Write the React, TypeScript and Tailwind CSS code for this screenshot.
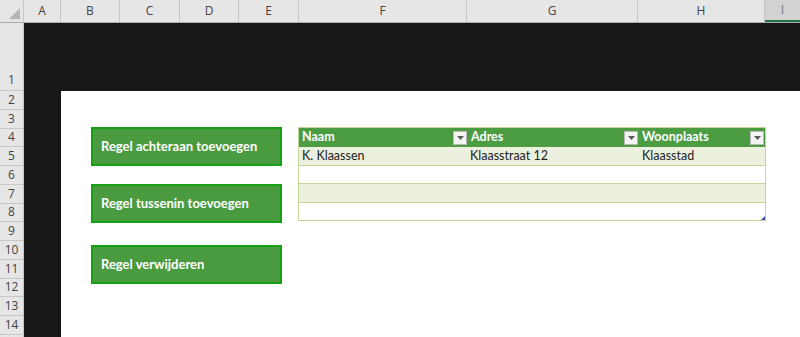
import React from 'react'

const cols = [
  { label: 'A', w: 37 },
  { label: 'B', w: 59 },
  { label: 'C', w: 60 },
  { label: 'D', w: 59 },
  { label: 'E', w: 60 },
  { label: 'F', w: 168 },
  { label: 'G', w: 171 },
  { label: 'H', w: 127 },
]

const rows = ['2', '3', '4', '5', '6', '7', '8', '9', '10', '11', '12', '13', '14', '']

const Dropdown = () => (
  <div className="w-[14px] h-[14px] bg-[#f4f4f4] border border-[#b8b8b8] flex items-center justify-center shrink-0">
    <svg width="7" height="4" viewBox="0 0 7 4">
      <path d="M0 0h7L3.5 4z" fill="#5a5a5a" />
    </svg>
  </div>
)

const Button = ({ text }: { text: string }) => (
  <div className="w-[191px] h-[39px] bg-[#4a9b40] border-2 border-[#16a016] flex items-center pl-[8px] text-white font-bold text-[13px]">
    {text}
  </div>
)

const App = () => {
  return (
    <div className="w-[800px] h-[337px] overflow-hidden bg-white" style={{ fontFamily: 'Lato, "Open Sans", sans-serif' }}>
      {/* column headers */}
      <div className="flex h-[23px] bg-[#e6e6e6] border-b border-[#ababab] text-[#444] text-[12px]" style={{ fontFamily: '"Open Sans", sans-serif' }}>
        <div className="w-[24px] border-r border-[#c6c6c6] flex items-end justify-end p-[3px]">
          <svg width="11" height="11" viewBox="0 0 11 11">
            <path d="M11 0V11H0z" fill="#b4b4b4" />
          </svg>
        </div>
        {cols.map((c) => (
          <div key={c.label} className="border-r border-[#c6c6c6] flex items-center justify-center" style={{ width: c.w }}>
            {c.label}
          </div>
        ))}
        <div className="flex-1 bg-[#d2d2d2] border-b-2 border-[#217346] flex items-center justify-center text-[#777]">I</div>
      </div>

      <div className="flex">
        {/* row headers */}
        <div className="w-[24px] bg-[#e6e6e6] border-r border-[#c6c6c6] text-[#444] text-[12px]" style={{ fontFamily: '"Open Sans", sans-serif' }}>
          <div className="h-[68px] border-b border-[#c6c6c6] flex items-end justify-center pb-[1px]">1</div>
          {rows.map((r, i) => (
            <div key={i} className="h-[18.75px] border-b border-[#c6c6c6] flex items-center justify-center">
              {r}
            </div>
          ))}
        </div>

        {/* sheet */}
        <div className="flex-1 flex flex-col">
          <div className="h-[68px] bg-[#171717]" />
          <div className="flex flex-1">
            <div className="w-[37px] bg-[#171717]" />
            <div className="flex-1 bg-white pl-[30px] pt-[36px] flex gap-[16px] items-start">
              <div className="flex flex-col">
                <Button text="Regel achteraan toevoegen" />
                <div className="h-[18px]" />
                <Button text="Regel tussenin toevoegen" />
                <div className="h-[22px]" />
                <Button text="Regel verwijderen" />
              </div>

              <div className="relative w-[468px] border border-[#c4d79b] text-[12.5px]">
                <div className="flex h-[19px] bg-[#4c9c42] text-white font-bold">
                  {[
                    { t: 'Naam', w: 169 },
                    { t: 'Adres', w: 171 },
                    { t: 'Woonplaats', w: 126 },
                  ].map((h) => (
                    <div key={h.t} className="flex items-center justify-between pl-[3px] pr-[1px]" style={{ width: h.w }}>
                      <span>{h.t}</span>
                      <Dropdown />
                    </div>
                  ))}
                </div>
                <div className="flex h-[19px] bg-[#ebf1de] border-b border-[#c4d79b] text-[#222] items-center">
                  <div className="w-[169px] pl-[3px]">K. Klaassen</div>
                  <div className="w-[171px] pl-[2px]">Klaasstraat 12</div>
                  <div className="w-[126px] pl-[3px]">Klaasstad</div>
                </div>
                <div className="h-[18px] bg-white border-b border-[#c4d79b]" />
                <div className="h-[19px] bg-[#ebf1de] border-b border-[#c4d79b]" />
                <div className="h-[17px] bg-white" />
                <svg className="absolute right-0 bottom-0" width="4" height="4" viewBox="0 0 4 4">
                  <path d="M4 0V4H0z" fill="#2f4fa8" />
                </svg>
              </div>
            </div>
          </div>
        </div>
      </div>
    </div>
  )
}

export default App
